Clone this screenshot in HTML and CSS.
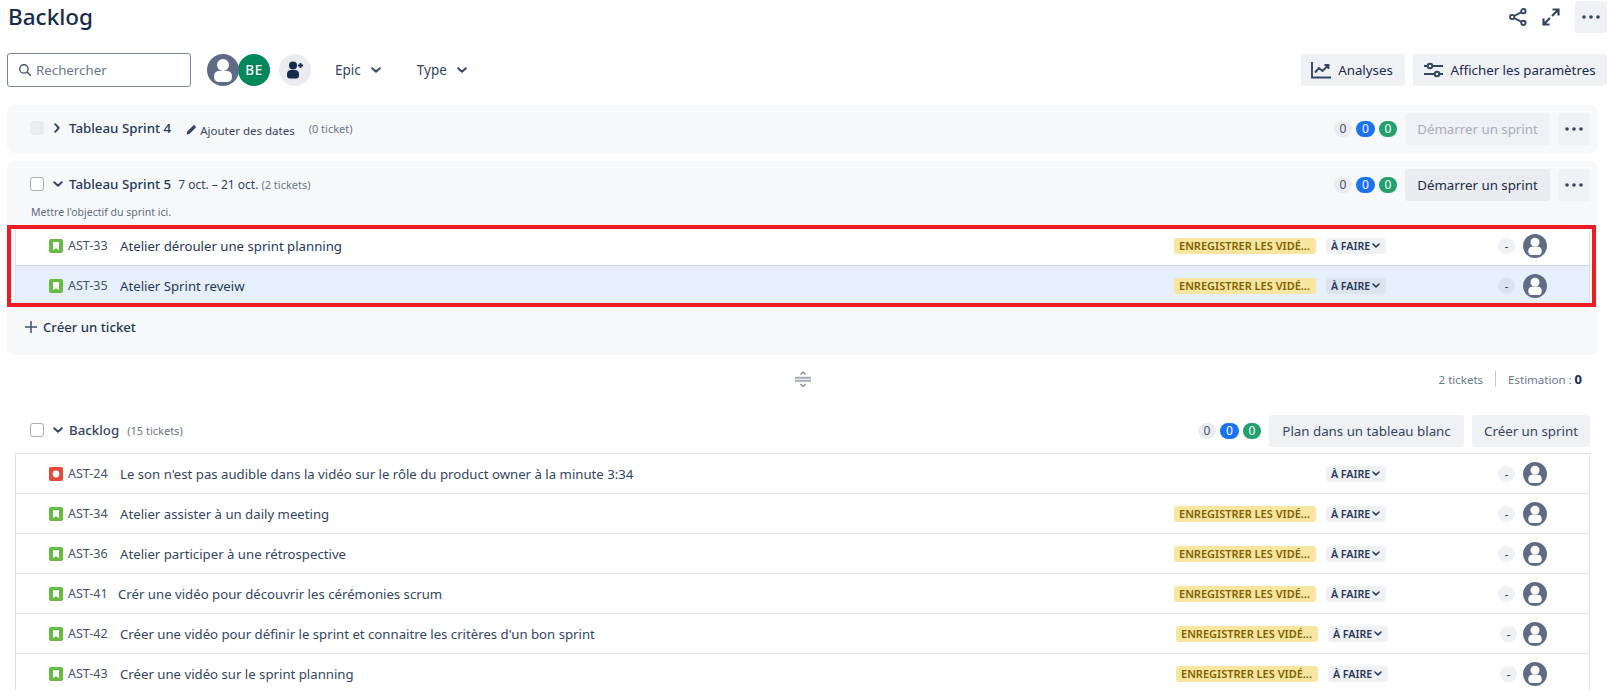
FILE: index.html
```html
<!DOCTYPE html>
<html lang="fr">
<head>
<meta charset="utf-8">
<title>Backlog</title>
<link rel="stylesheet" href="styles.css">
</head>
<body>
<svg class="defs" width="0" height="0" aria-hidden="true">
  <symbol id="i-story" viewBox="0 0 14 14"><rect width="14" height="14" rx="2" fill="#65ba43"/><path d="M4 3h6v8.200L7 9.200l-3 2z" fill="#fff"/></symbol>
  <symbol id="i-bug" viewBox="0 0 14 14"><rect width="14" height="14" rx="2" fill="#e5493a"/><circle cx="7" cy="7" r="3.400" fill="#fff"/></symbol>
  <symbol id="i-user" viewBox="0 0 24 24"><circle cx="12" cy="12" r="12" fill="#606c85"/><circle cx="12" cy="8.300" r="4.500" fill="#fff"/><path d="M5.300 16.500c0-2.400 1.800-3.800 3.700-3.800h6c1.900 0 3.700 1.400 3.700 3.800v1.200c0 2-1.500 3.300-3.200 3.300H8.500c-1.700 0-3.200-1.300-3.200-3.300z" fill="#fff"/></symbol>
  <symbol id="i-down" viewBox="0 0 10 6"><path d="M1.200 1.200 5 4.700l3.800-3.500" fill="none" stroke="currentColor" stroke-width="1.900" stroke-linecap="round" stroke-linejoin="round"/></symbol>
  <symbol id="i-dots" viewBox="0 0 18 4"><circle cx="2" cy="2" r="1.800" fill="currentColor"/><circle cx="9" cy="2" r="1.800" fill="currentColor"/><circle cx="16" cy="2" r="1.800" fill="currentColor"/></symbol>
</svg>

<header class="page-head">
  <h1>Backlog</h1>
  <div class="head-actions">
    <svg class="ico-18" viewBox="0 0 20 20"><g fill="none" stroke="#344563" stroke-width="2.100"><circle cx="16" cy="3.500" r="2.400"/><circle cx="16" cy="16.500" r="2.400"/><circle cx="3.500" cy="10" r="2.400"/><path d="M5.600 8.900 13.900 4.600M5.600 11.100l8.300 4.300"/></g></svg>
    <svg class="ico-18 expand" viewBox="0 0 18 18"><g fill="none" stroke="#344563" stroke-width="2.200"><path d="M10 8 16 2M10.500 1.500h6V7.500M8 10 2 16M1.500 10.500v6h6"/></g></svg>
    <button class="btn square"><svg class="dots"><use href="#i-dots"/></svg></button>
  </div>
</header>

<section class="toolbar">
  <label class="search">
    <svg viewBox="0 0 16 16" class="search-ico"><circle cx="6.800" cy="6.800" r="4.800" fill="none" stroke="#42526e" stroke-width="1.500"/><path d="m10.400 10.400 3.900 3.900" stroke="#42526e" stroke-width="1.600" stroke-linecap="round"/></svg>
    <span>Rechercher</span>
  </label>
  <div class="avatars">
    <svg class="avatar-32"><use href="#i-user"/></svg>
    <span class="avatar-be">BE</span>
  </div>
  <span class="add-user">
    <svg viewBox="0 0 20 20" width="20" height="20"><circle cx="8" cy="5.500" r="4" fill="#172b4d"/><path d="M2 14c0-2.600 1.800-4 4-4h4c2.200 0 4 1.400 4 4v2c0 1.500-1 2.500-2.500 2.500h-7C3 18.500 2 17.500 2 16z" fill="#172b4d"/><path d="M15.500 3v5M13 5.500h5" stroke="#172b4d" stroke-width="1.800"/></svg>
  </span>
  <span class="filter epic">Epic <svg class="down"><use href="#i-down"/></svg></span>
  <span class="filter type">Type <svg class="down"><use href="#i-down"/></svg></span>
  <div class="toolbar-right">
    <button class="btn with-icon analyses">
      <svg viewBox="0 0 20 18" width="20" height="18"><g fill="none" stroke="#344563" stroke-width="1.900"><path d="M1 1v15.500h19"/><path d="M4 11.500 8 7l3.500 3L17 4.500M13.500 4H17.500V8"/></g></svg>
      Analyses
    </button>
    <button class="btn with-icon settings">
      <svg viewBox="0 0 19 16" width="19" height="16"><g fill="none" stroke="#344563" stroke-width="2"><path d="M0 4h3.500M8.500 4H19M0 12h10.500M15.500 12H19"/><circle cx="6" cy="4" r="2.300"/><circle cx="13" cy="12" r="2.300"/></g></svg>
      Afficher les paramètres
    </button>
  </div>
</section>

<section class="card card-s4">
  <div class="sprint-head">
    <span class="check disabled"></span>
    <svg class="chev-right" viewBox="0 0 6 10"><path d="M1.200 1.200 4.700 5 1.200 8.800" fill="none" stroke="#344563" stroke-width="1.900" stroke-linecap="round" stroke-linejoin="round"/></svg>
    <span class="sprint-name">Tableau Sprint 4</span>
    <svg class="pencil" viewBox="0 0 12 12"><path d="M0.500 11.500 1.500 8 8 1.500a1 1 0 0 1 1.400 0L10.500 2.600a1 1 0 0 1 0 1.400L4 10.500z" fill="#344563"/></svg>
    <span class="add-dates">Ajouter des dates</span>
    <span class="muted count-s4">(0 ticket)</span>
    <div class="sprint-right">
      <span class="badges"><span class="b b-gray">0</span><span class="b b-blue">0</span><span class="b b-green">0</span></span>
      <button class="btn btn-disabled start">Démarrer un sprint</button>
      <button class="btn square"><svg class="dots"><use href="#i-dots"/></svg></button>
    </div>
  </div>
</section>

<section class="card card-s5">
  <div class="sprint-head">
    <span class="check"></span>
    <svg class="down-head"><use href="#i-down"/></svg>
    <span class="sprint-name">Tableau Sprint 5</span>
    <span class="dates">7 oct. – 21 oct.</span>
    <span class="muted count-s5">(2 tickets)</span>
    <div class="sprint-right">
      <span class="badges"><span class="b b-gray">0</span><span class="b b-blue">0</span><span class="b b-green">0</span></span>
      <button class="btn btn-dark start">Démarrer un sprint</button>
      <button class="btn square"><svg class="dots"><use href="#i-dots"/></svg></button>
    </div>
  </div>
  <p class="goal">Mettre l'objectif du sprint ici.</p>
  <div class="issues in-sprint">
    <div class="row">
      <svg class="type"><use href="#i-story"/></svg><span class="key">AST-33</span><span class="sum">Atelier dérouler une sprint planning</span>
      <span class="epic-pill">ENREGISTRER LES VIDÉ...</span><span class="status">À FAIRE<svg class="down-s"><use href="#i-down"/></svg></span><span class="est">-</span><svg class="avatar-24"><use href="#i-user"/></svg>
    </div>
    <div class="row selected">
      <svg class="type"><use href="#i-story"/></svg><span class="key">AST-35</span><span class="sum">Atelier Sprint reveiw</span>
      <span class="epic-pill">ENREGISTRER LES VIDÉ...</span><span class="status">À FAIRE<svg class="down-s"><use href="#i-down"/></svg></span><span class="est">-</span><svg class="avatar-24"><use href="#i-user"/></svg>
    </div>
    <div class="highlight"></div>
  </div>
  <div class="create"><svg viewBox="0 0 12 12" width="12" height="12"><path d="M6 0v12M0 6h12" stroke="#42526e" stroke-width="1.500"/></svg>Créer un ticket</div>
</section>

<div class="splitter">
  <svg class="drag" viewBox="0 0 16 16" width="16" height="16"><rect y="5" width="16" height="6.500" fill="#ebecf0"/><g fill="none" stroke="#8993a4" stroke-width="1.200"><path d="M0 6.800h16M0 9.800h16"/><path d="M5.500 3.500 8 1l2.500 2.500M5.500 13 8 15.500l2.500-2.500" stroke-width="1.500"/></g></svg>
  <div class="totals"><span class="tot">2 tickets</span><span class="sep"></span><span class="tot">Estimation : <b>0</b></span></div>
</div>

<section class="backlog">
  <div class="sprint-head">
    <span class="check"></span>
    <svg class="down-head"><use href="#i-down"/></svg>
    <span class="sprint-name backlog-name">Backlog</span>
    <span class="muted count-bl">(15 tickets)</span>
    <div class="sprint-right">
      <span class="badges"><span class="b b-gray">0</span><span class="b b-blue">0</span><span class="b b-green">0</span></span>
      <button class="btn plain plan">Plan dans un tableau blanc</button>
      <button class="btn plain">Créer un sprint</button>
    </div>
  </div>
  <div class="issues">
    <div class="row">
      <svg class="type"><use href="#i-bug"/></svg><span class="key">AST-24</span><span class="sum">Le son n'est pas audible dans la vidéo sur le rôle du product owner à la minute 3:34</span>
      <span class="status">À FAIRE<svg class="down-s"><use href="#i-down"/></svg></span><span class="est">-</span><svg class="avatar-24"><use href="#i-user"/></svg>
    </div>
    <div class="row">
      <svg class="type"><use href="#i-story"/></svg><span class="key">AST-34</span><span class="sum">Atelier assister à un daily meeting</span>
      <span class="epic-pill">ENREGISTRER LES VIDÉ...</span><span class="status">À FAIRE<svg class="down-s"><use href="#i-down"/></svg></span><span class="est">-</span><svg class="avatar-24"><use href="#i-user"/></svg>
    </div>
    <div class="row">
      <svg class="type"><use href="#i-story"/></svg><span class="key">AST-36</span><span class="sum">Atelier participer à une rétrospective</span>
      <span class="epic-pill">ENREGISTRER LES VIDÉ...</span><span class="status">À FAIRE<svg class="down-s"><use href="#i-down"/></svg></span><span class="est">-</span><svg class="avatar-24"><use href="#i-user"/></svg>
    </div>
    <div class="row">
      <svg class="type"><use href="#i-story"/></svg><span class="key narrow">AST-41</span><span class="sum">Crér une vidéo pour découvrir les cérémonies scrum</span>
      <span class="epic-pill">ENREGISTRER LES VIDÉ...</span><span class="status">À FAIRE<svg class="down-s"><use href="#i-down"/></svg></span><span class="est">-</span><svg class="avatar-24"><use href="#i-user"/></svg>
    </div>
    <div class="row shifted">
      <svg class="type"><use href="#i-story"/></svg><span class="key">AST-42</span><span class="sum">Créer une vidéo pour définir le sprint et connaitre les critères d'un bon sprint</span>
      <span class="epic-pill">ENREGISTRER LES VIDÉ...</span><span class="status">À FAIRE<svg class="down-s"><use href="#i-down"/></svg></span><span class="est">-</span><svg class="avatar-24"><use href="#i-user"/></svg>
    </div>
    <div class="row shifted">
      <svg class="type"><use href="#i-story"/></svg><span class="key">AST-43</span><span class="sum">Créer une vidéo sur le sprint planning</span>
      <span class="epic-pill">ENREGISTRER LES VIDÉ...</span><span class="status">À FAIRE<svg class="down-s"><use href="#i-down"/></svg></span><span class="est">-</span><svg class="avatar-24"><use href="#i-user"/></svg>
    </div>
  </div>
</section>
</body>
</html>
```
FILE: styles.css
```css
* { box-sizing: border-box; }
html, body { height: 100%; }
body {
  margin: 0;
  height: 690px;
  overflow: hidden;
  background: #fff;
  color: #172b4d;
  font-family: "Noto Sans", "Open Sans", sans-serif;
  font-size: 13px;
}
.defs { position: absolute; }
button { font: inherit; border: 0; cursor: pointer; }

.page-head {
  display: flex;
  justify-content: space-between;
  align-items: flex-start;
  height: 53px;
  padding: 1px 2px 0 8px;
}
h1 { margin: 0; font-size: 22.500px; font-weight: 500; line-height: 32px; color: #172b4d; }
.head-actions { display: flex; align-items: center; gap: 15px; }
.ico-18 { width: 18px; height: 18px; }
.expand { margin-left: 0; }

.btn {
  height: 32px;
  border-radius: 3px;
  background: #f0f1f4;
  color: #344563;
  font-size: 13.300px;
  white-space: nowrap;
  display: inline-flex;
  align-items: center;
  justify-content: center;
  padding: 0 12px;
}
.square { width: 32px; padding: 0; }
.dots { width: 18px; height: 4px; color: #344563; }
.with-icon { gap: 7px; color: #172b4d; padding: 0; }
.analyses { width: 104px; padding-right: 2px; }
.settings { width: 194px; }
.plan { width: 195px; padding: 0; }

.toolbar { display: flex; align-items: center; height: 33px; padding: 0 2px 0 7px; }
.search {
  width: 184px; height: 34px;
  border: 1px solid #7a869a;
  border-radius: 3px;
  display: flex; align-items: center;
  gap: 4px; padding-left: 10px;
  color: #6b778c; font-size: 13.300px;
}
.search-ico { width: 14px; height: 14px; }
.avatars { display: flex; margin-left: 16px; }
.avatar-32 { width: 32px; height: 32px; position: relative; z-index: 1; }
.avatar-be {
  width: 32px; height: 32px; margin-left: -1px;
  border-radius: 50%;
  background: #00875a; color: #fff;
  font-size: 13.500px; font-weight: 500; letter-spacing: .5px;
  display: flex; align-items: center; justify-content: center;
}
.add-user {
  width: 32px; height: 32px; margin-left: 9px;
  border-radius: 50%; background: #ebecf0;
  display: flex; align-items: center; justify-content: center;
}
.filter { display: inline-flex; align-items: center; gap: 10px; font-size: 13.500px; color: #344563; }
.epic { margin-left: 24px; }
.filter.type { margin-left: 36px; }
.down { width: 10px; height: 6px; color: #344563; }
.toolbar-right { margin-left: auto; display: flex; gap: 8px; }

.card { margin: 0 11px 0 7px; background: #f7f8f9; border-radius: 8px; }
.card-s4 { margin-top: 19px; height: 48px; padding-top: 8px; }
.card-s5 { margin-top: 8px; height: 194px; padding-top: 8px; }

.sprint-head { display: flex; align-items: center; height: 32px; padding: 0 8px 0 23px; }
.check { width: 14px; height: 14px; margin-bottom: 2px; border: 1.500px solid #a5adba; border-radius: 3px; background: #fff; flex: none; }
.check.disabled { background: #ebecf0; border-color: #ebecf0; }
.chev-right { width: 6px; height: 10px; margin: 0 9px 2px 10px; flex: none; }
.down-head { width: 10px; height: 6px; margin: 0 6px 2px 9px; color: #344563; flex: none; }
.sprint-name { font-size: 13.300px; font-weight: 500; color: #253858; margin-bottom: 3px; }
.backlog-name { color: #344563; }
.pencil { width: 11px; height: 11px; margin: 1px 3px 0 15px; }
.add-dates { font-size: 11.500px; margin-top: 3px; color: #344563; }
.muted { font-size: 11px; color: #6b778c; margin-bottom: 2px; }
.count-s4 { margin-left: 14px; }
.count-s5 { margin-left: 3px; }
.count-bl { margin-left: 8px; }
.dates { font-size: 12px; color: #344563; margin-left: 7px; margin-bottom: 2px; }
.sprint-right { margin-left: auto; display: flex; align-items: center; gap: 8px; }
.badges { display: flex; gap: 4px; }
.b {
  height: 16px; min-width: 18px; border-radius: 8px;
  font-size: 12px; line-height: 16px; text-align: center;
}
.b-gray { background: #ebecf0; color: #42526e; }
.b-blue { background: #1a73f0; color: #fff; width: 19px; }
.b-green { background: #22a06b; color: #fff; }
.start { width: 145px; padding: 0; }
.btn-disabled { background: #f0f1f4; color: #a5adba; }
.btn-dark { background: #ebecf0; color: #172b4d; }
.plain { background: #f0f1f4; }

.goal { margin: 2px 0 0 24px; height: 23px; font-size: 10.500px; line-height: 18px; color: #5e6c84; }

.issues { position: relative; margin: 0 0 0 8px; }
.in-sprint { width: 1575px; }
.row {
  display: flex; align-items: center;
  height: 40px;
  padding: 0 42px 0 33px;
  background: #fff;
  border: solid #dfe1e6;
  border-width: 0 1px 1px 1px;
}
.in-sprint .row { border-color: #c1d7ea #dfe1e6; }
.selected { background: #e6f0fc; }
svg.type { width: 14px; height: 14px; flex: none; }
.key { margin-left: 5px; width: 52px; font-size: 12.500px; color: #42526e; }
.key.narrow { width: 50px; }
.sum { flex: 1; font-size: 13.200px; color: #344563; white-space: nowrap; }
.in-sprint .sum { color: #253858; }
.epic-pill {
  width: 142px; height: 16px; border-radius: 3px;
  padding-left: 5px;
  background: #f8e6a0; color: #7f5f01;
  font-size: 11px; font-weight: 600; line-height: 16px;
  white-space: nowrap;
}
.status {
  margin-left: 10px; width: 60px; height: 16px; border-radius: 3px;
  background: #f0f1f4; color: #253858;
  font-size: 10.600px; font-weight: 600; line-height: 16px;
  display: inline-flex; align-items: center; gap: 2px; padding-left: 5px;
}
.selected .status, .selected .est { background: #dbe3ee; }
.down-s { width: 8px; height: 5px; color: #253858; }
.est {
  margin-left: 112px; width: 17px; height: 16px; border-radius: 8px;
  background: #f0f1f4; color: #172b4d;
  font-size: 11px; line-height: 16px; text-align: center;
}
.avatar-24 { width: 24px; height: 24px; margin-left: 8px; flex: none; }
.shifted .epic-pill { margin-left: 2px; }
.shifted .est { margin-right: -2px; }

.highlight {
  position: absolute;
  top: -1px; left: -8px; right: -6px; bottom: -1px;
  border: 4px solid #ed1c24;
  pointer-events: none;
}

.create { display: flex; align-items: center; gap: 6px; margin: 1px 0 0 18px; height: 40px; font-size: 13.200px; font-weight: 500; color: #253858; }

.splitter { position: relative; height: 48px; display: flex; align-items: center; justify-content: flex-end; padding-right: 27px; }
.drag { position: absolute; left: 795px; top: 16px; }
.totals { display: flex; align-items: center; gap: 12px; font-size: 11.500px; color: #6b778c; }
.sep { width: 1px; height: 16px; background: #c1c7d0; }
.tot b { color: #172b4d; font-weight: 700; font-size: 13px; }

.backlog { margin-left: 7px; margin-right: 11px; height: 300px; }
.backlog .sprint-head { height: 32px; margin-top: 12px; }
.backlog .issues { margin-top: 6px; border-top: 1px solid #dfe1e6; width: 1575px; }
```
